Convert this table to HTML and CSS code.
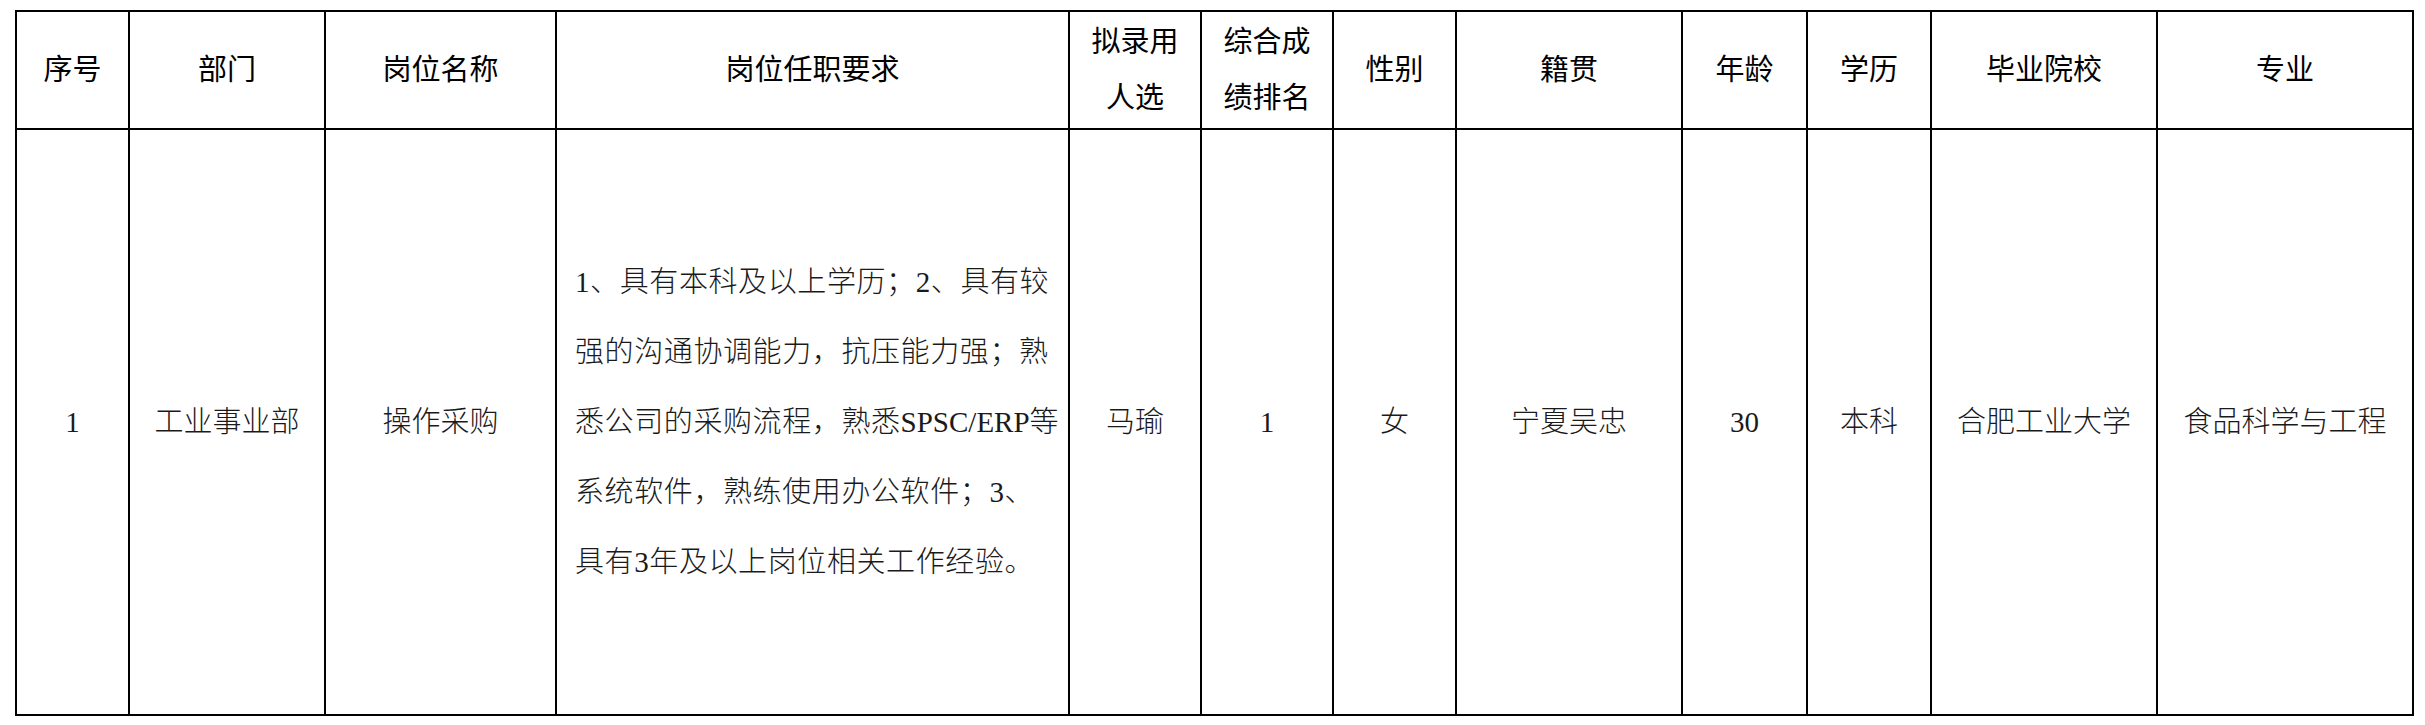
FILE: index.html
```html
<!DOCTYPE html>
<html lang="zh-CN">
<head>
<meta charset="utf-8">
<title>拟录用人选公示</title>
<link rel="stylesheet" href="styles.css">
</head>
<body>
<table class="roster">
  <colgroup>
    <col class="c-no">
    <col class="c-dept">
    <col class="c-post">
    <col class="c-req">
    <col class="c-name">
    <col class="c-rank">
    <col class="c-sex">
    <col class="c-origin">
    <col class="c-age">
    <col class="c-edu">
    <col class="c-school">
    <col class="c-major">
  </colgroup>
  <thead>
    <tr class="head-row">
      <th>序号</th>
      <th>部门</th>
      <th>岗位名称</th>
      <th>岗位任职要求</th>
      <th class="two-line">拟录用<br>人选</th>
      <th class="two-line">综合成<br>绩排名</th>
      <th>性别</th>
      <th>籍贯</th>
      <th>年龄</th>
      <th>学历</th>
      <th>毕业院校</th>
      <th>专业</th>
    </tr>
  </thead>
  <tbody>
    <tr class="body-row">
      <td>1</td>
      <td>工业事业部</td>
      <td>操作采购</td>
      <td class="req">1、具有本科及以上学历；2、具有较<br>强的沟通协调能力，抗压能力强；熟<br>悉公司的采购流程，熟悉<span class="latin">SPSC/ERP</span>等<br>系统软件，熟练使用办公软件；3、<br>具有3年及以上岗位相关工作经验。</td>
      <td>马瑜</td>
      <td>1</td>
      <td>女</td>
      <td>宁夏吴忠</td>
      <td>30</td>
      <td>本科</td>
      <td>合肥工业大学</td>
      <td>食品科学与工程</td>
    </tr>
  </tbody>
</table>
</body>
</html>
```

FILE: styles.css
```css
html, body {
  margin: 0;
  padding: 0;
  background: #ffffff;
}

body {
  padding: 10px 0 0 15px;
  font-family: "Liberation Serif", "Noto Sans CJK SC", serif;
  color: #000;
}

.roster {
  border-collapse: collapse;
  table-layout: fixed;
  width: 2399px;
}

.roster th,
.roster td {
  border: 2px solid #000;
  padding: 0;
  text-align: center;
  vertical-align: middle;
  font-size: 29px;
  white-space: nowrap;
}

.roster th {
  font-weight: 400;
  line-height: 56px;
  color: #000;
}

.roster td {
  font-weight: 300;
  line-height: 70px;
  color: #1a1a1a;
}

.head-row { height: 118px; }
.body-row { height: 586px; }

.c-no { width: 113px; }
.c-dept { width: 196px; }
.c-post { width: 231px; }
.c-req { width: 513px; }
.c-name { width: 132px; }
.c-rank { width: 132px; }
.c-sex { width: 123px; }
.c-origin { width: 226px; }
.c-age { width: 125px; }
.c-edu { width: 124px; }
.c-school { width: 226px; }
.c-major { width: 256px; }

.roster td.req {
  text-align: left;
  padding-left: 18px;
  letter-spacing: 0.6px;
}

.req .latin {
  letter-spacing: 0;
}
```
